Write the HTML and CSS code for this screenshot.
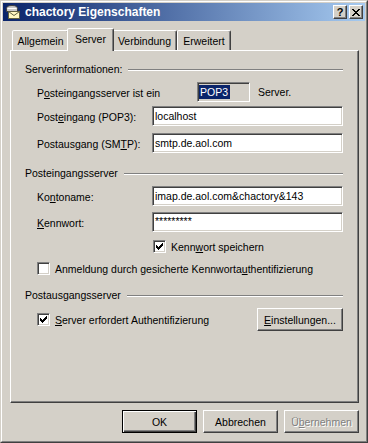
FILE: index.html
```html
<!DOCTYPE html>
<html lang="de">
<head>
    <meta charset="UTF-8">
    <title>chactory Eigenschaften</title>
    <link rel="stylesheet" href="styles.css">
</head>
<body>
    <div class="window">
        <div class="frame">
            <div class="titlebar">
                <svg class="app-icon" width="16" height="16" viewBox="0 0 16 16">
                    <path d="M1.5 7.5 V4.5 Q1.5 1.5 7 1.5 Q12.5 1.5 12.5 4.5 V7.5 Z" fill="#c8c8c8" stroke="#404040"/>
                    <path d="M2.5 4.5 H11.5" stroke="#ffffff"/>
                    <rect x="3.5" y="7.5" width="11" height="7" fill="#fff8c0" stroke="#606040"/>
                    <path d="M3.5 7.5 L9 11.5 L14.5 7.5" fill="none" stroke="#606040"/>
                </svg>
                <span class="title">chactory Eigenschaften</span>
                <div class="caption-buttons">
                    <div class="cap-btn">?</div>
                    <div class="cap-btn">
                        <svg width="8" height="7" viewBox="0 0 8 7">
                            <path d="M0 0h2v1h-2z M1 1h2v1h-2z M2 2h1v1h-1z M3 3h2v1h-2z M2 4h1v1h-1z M1 5h2v1h-2z M0 6h2v1h-2z M5 2h1v1h-1z M5 4h1v1h-1z M6 0h2v1h-2z M5 1h2v1h-2z M5 5h2v1h-2z M6 6h2v1h-2z M3 2h2v1h-2z M3 4h2v1h-2z"/>
                        </svg>
                    </div>
                </div>
            </div>

            <div class="dialog">
                <div class="tabs">
                    <div class="tab tab-general">Allgemein</div>
                    <div class="tab tab-server active">Server</div>
                    <div class="tab tab-connection">Verbindung</div>
                    <div class="tab tab-advanced">Erweitert</div>
                </div>

                <div class="panel">
                    <div class="legend legend-first">
                        <span>Serverinformationen:</span>
                        <div class="rule"></div>
                    </div>

                    <div class="row row-type">
                        <span class="label label-wide">P<u>o</u>steingangsserver ist ein</span>
                        <div class="readonly-box"><span class="selected">POP3</span></div>
                        <span class="after-box">Server.</span>
                    </div>

                    <div class="row row-in">
                        <span class="label">Post<u>e</u>ingang (POP3):</span>
                        <div class="field">localhost</div>
                    </div>

                    <div class="row row-out">
                        <span class="label">Postausgang (SM<u>T</u>P):</span>
                        <div class="field">smtp.de.aol.com</div>
                    </div>

                    <div class="legend">
                        <span>Posteingangsserver</span>
                        <div class="rule"></div>
                    </div>

                    <div class="row row-account">
                        <span class="label">Ko<u>n</u>toname:</span>
                        <div class="field">imap.de.aol.com&amp;chactory&amp;143</div>
                    </div>

                    <div class="row row-password">
                        <span class="label"><u>K</u>ennwort:</span>
                        <div class="field password">*********</div>
                    </div>

                    <div class="check-row row-save">
                        <span class="check checked">
                            <svg width="7" height="7" viewBox="0 0 7 7"><path d="M0 2h1v3h-1z M1 3h1v3h-1z M2 4h1v3h-1z M3 3h1v3h-1z M4 2h1v3h-1z M5 1h1v3h-1z M6 0h1v3h-1z"/></svg>
                        </span>
                        <span>Kenn<u>w</u>ort speichern</span>
                    </div>

                    <div class="check-row row-spa">
                        <span class="check"></span>
                        <span>Anmeldung durch gesicherte Kennworta<u>u</u>thentifizierung</span>
                    </div>

                    <div class="legend">
                        <span>Postausgangsserver</span>
                        <div class="rule"></div>
                    </div>

                    <div class="check-row row-auth">
                        <span class="check checked">
                            <svg width="7" height="7" viewBox="0 0 7 7"><path d="M0 2h1v3h-1z M1 3h1v3h-1z M2 4h1v3h-1z M3 3h1v3h-1z M4 2h1v3h-1z M5 1h1v3h-1z M6 0h1v3h-1z"/></svg>
                        </span>
                        <span><u>S</u>erver erfordert Authentifizierung</span>
                        <div class="btn btn-settings"><span><u>E</u>instellungen...</span></div>
                    </div>
                </div>

                <div class="actions">
                    <div class="btn default">OK</div>
                    <div class="btn">Abbrechen</div>
                    <div class="btn disabled">Ü<u>b</u>ernehmen</div>
                </div>
            </div>
        </div>
    </div>
</body>
</html>
```

FILE: styles.css
```css
* {
    box-sizing: border-box;
}

body {
    margin: 0;
    font-family: "Liberation Sans", Arial, sans-serif;
    font-size: 10.5px;
    color: #000;
    background: #d4d0c8;
}

.window {
    width: 368px;
    height: 443px;
    border: 1px solid;
    border-color: #d4d0c8 #404040 #404040 #d4d0c8;
    background: #d4d0c8;
}

.frame {
    height: 100%;
    border: 1px solid;
    border-color: #fff #808080 #808080 #fff;
    padding: 1px;
}

/* title bar */
.titlebar {
    height: 18px;
    display: flex;
    align-items: center;
    padding: 0 2px;
    background: linear-gradient(to right, #0a246a, #a6caf0);
    color: #fff;
}

.app-icon {
    flex: none;
}

.title {
    margin-left: 4px;
    font-weight: bold;
    font-size: 12px;
}

.caption-buttons {
    margin-left: auto;
    display: flex;
    gap: 2px;
}

.cap-btn {
    width: 14px;
    height: 14px;
    display: flex;
    align-items: center;
    justify-content: center;
    background: #d4d0c8;
    color: #000;
    font-weight: bold;
    font-size: 11px;
    border: 1px solid;
    border-color: #fff #404040 #404040 #fff;
    box-shadow: inset -1px -1px #808080;
}

/* dialog body */
.dialog {
    padding: 7px 6px 0 7px;
}

.tabs {
    display: flex;
    align-items: flex-end;
    height: 23px;
    margin-bottom: -1px;
    padding-left: 2px;
    position: relative;
    z-index: 1;
}

.tab {
    height: 20px;
    margin-bottom: 1px;
    padding-top: 1px;
    display: flex;
    align-items: center;
    justify-content: center;
    background: #d4d0c8;
    border: 1px solid;
    border-bottom: none;
    border-color: #fff #404040 transparent #fff;
    border-radius: 2px 2px 0 0;
    box-shadow: inset -1px 0 #808080;
}

.tab-general { width: 57px; }
.tab-server { width: 47px; }
.tab-connection { width: 65px; }
.tab-advanced { width: 54px; }

.tab.active {
    height: 23px;
    margin: 0 -2px;
    padding-top: 0;
    padding-bottom: 2px;
    position: relative;
    z-index: 1;
}

.panel {
    height: 353px;
    padding: 0 15px 0 14px;
    border: 1px solid;
    border-color: #fff #404040 #404040 #fff;
    box-shadow: inset -1px -1px #808080;
}

.legend {
    display: flex;
    align-items: center;
    height: 14px;
    margin-top: 13px;
}

.legend-first {
    margin-top: 11px;
}

.rule {
    flex: 1;
    margin-left: 6px;
    margin-top: 1px;
    border-top: 1px solid #808080;
    border-bottom: 1px solid #fff;
}

.row {
    display: flex;
    align-items: center;
    height: 20px;
    padding-left: 12px;
}

.row-type { margin-top: 6px; }
.row-in { margin-top: 4px; }
.row-out { margin-top: 7px; }
.row-account { margin-top: 6px; }
.row-password { margin-top: 6px; }

.label {
    width: 115px;
    flex: none;
    padding-top: 2px;
}

.label-wide {
    width: 160px;
}

.field {
    flex: 1;
    height: 20px;
    display: flex;
    align-items: center;
    padding: 0 2px;
    background: #fff;
    border: 1px solid;
    border-color: #808080 #fff #fff #808080;
    box-shadow: inset 1px 1px #404040, inset -1px -1px #d4d0c8;
}

.field.password {
    align-items: flex-start;
    padding-top: 2px;
}

.readonly-box {
    width: 53px;
    height: 20px;
    display: flex;
    align-items: center;
    padding-left: 1px;
    border: 1px solid;
    border-color: #808080 #fff #fff #808080;
    box-shadow: inset 1px 1px #404040, inset -1px -1px #d4d0c8;
}

.selected {
    background: #0a246a;
    color: #fff;
    padding: 0 2px 0 1px;
    line-height: 14px;
}

.after-box {
    margin-left: 8px;
}

.check-row {
    display: flex;
    align-items: center;
    gap: 5px;
    height: 13px;
}

.row-save {
    margin-top: 8px;
    padding-left: 128px;
}

.row-spa {
    margin-top: 9px;
    padding-left: 12px;
}

.row-auth {
    margin-top: 6px;
    height: 23px;
    padding-left: 12px;
}

.check {
    width: 13px;
    height: 13px;
    flex: none;
    display: flex;
    align-items: center;
    justify-content: center;
    background: #fff;
    border: 1px solid;
    border-color: #808080 #fff #fff #808080;
    box-shadow: inset 1px 1px #404040, inset -1px -1px #d4d0c8;
}

/* push buttons */
.btn {
    width: 75px;
    height: 23px;
    display: flex;
    align-items: center;
    justify-content: center;
    background: #d4d0c8;
    border: 1px solid;
    border-color: #fff #404040 #404040 #fff;
    box-shadow: inset -1px -1px #808080;
}

.btn-settings {
    width: 86px;
    margin-left: auto;
}

.btn.default {
    border-color: #000;
    box-shadow: inset 1px 1px #fff, inset -1px -1px #404040, inset -2px -2px #808080;
}

.btn.disabled {
    color: #808080;
    text-shadow: 1px 1px #fff;
}

.actions {
    display: flex;
    justify-content: flex-end;
    gap: 6px;
    margin-top: 7px;
}
```
